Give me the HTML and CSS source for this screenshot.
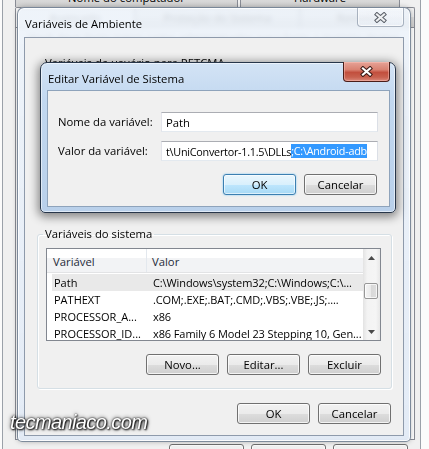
FILE: index.html
```html
<!DOCTYPE html>
<html lang="pt-BR">
<head>
<meta charset="utf-8">
<title>Variáveis de Ambiente</title>
<link rel="stylesheet" href="styles.css">
</head>
<body>
<div class="desk">
  <div class="sysprops">
    <div class="tabrow">
      <div class="tab t1">Nome do computador</div>
      <div class="tab t2">Hardware</div>
    </div>
    <div class="tabrow">
      <div class="tab t3 active">Avançado</div>
      <div class="tab t4">Proteção do Sistema</div>
      <div class="tab t5">Remoto</div>
    </div>
    <div class="tabpanel">
      <p class="note">Você deve fazer logon como administrador para fazer a maioria destas alterações.</p>
    </div>
    <div class="sysbtns" aria-hidden="true">
      <span class="btn wide"></span>
      <span class="btn wide"></span>
      <span class="btn wide"></span>
    </div>
  </div>

  <div class="window envwin">
    <div class="titlebar"><span class="title">Variáveis de Ambiente</span></div>
    <div class="closebtn inactive">
      <svg width="13" height="11" viewBox="0 0 13 11"><path d="M3 2.5 L10 8.5 M10 2.5 L3 8.5" stroke="#5b6069" stroke-width="4.2" stroke-linecap="square"/><path d="M3 2.5 L10 8.5 M10 2.5 L3 8.5" stroke="#eef0f2" stroke-width="2.2" stroke-linecap="square"/></svg>
    </div>
    <div class="client">
      <div class="ugroup"><span class="glabel">Variáveis de usuário para PETCMA</span></div>
      <fieldset class="group">
        <legend>Variáveis do sistema</legend>
        <div class="listview">
          <div class="lvmain">
            <div class="lvhead">
              <div class="hcol1">Variável</div>
              <div class="hcol2">Valor</div>
            </div>
            <div class="lvrows">
              <div class="row sel"><span class="c1">Path</span><span class="c2">C:\Windows\system32;C:\Windows;C:\...</span></div>
              <div class="row"><span class="c1">PATHEXT</span><span class="c2">.COM;.EXE;.BAT;.CMD;.VBS;.VBE;.JS;....</span></div>
              <div class="row"><span class="c1">PROCESSOR_A...</span><span class="c2">x86</span></div>
              <div class="row"><span class="c1">PROCESSOR_ID...</span><span class="c2">x86 Family 6 Model 23 Stepping 10, Gen...</span></div>
            </div>
          </div>
          <div class="vscroll">
            <div class="sbtn"><svg width="7" height="4" viewBox="0 0 7 4"><path d="M0 4 L3.5 0 L7 4 Z" fill="#4a4a4a"/></svg></div>
            <div class="track"><div class="thumb"></div></div>
            <div class="sbtn"><svg width="7" height="4" viewBox="0 0 7 4"><path d="M0 0 L7 0 L3.5 4 Z" fill="#4a4a4a"/></svg></div>
          </div>
        </div>
        <div class="btnrow">
          <span class="btn">Novo...</span>
          <span class="btn">Editar...</span>
          <span class="btn">Excluir</span>
        </div>
      </fieldset>
      <div class="btnrow dlgbtns">
        <span class="btn">OK</span>
        <span class="btn">Cancelar</span>
      </div>
    </div>
  </div>

  <div class="window editdlg">
    <div class="titlebar"><span class="title">Editar Variável de Sistema</span></div>
    <div class="closebtn active">
      <svg width="13" height="11" viewBox="0 0 13 11"><path d="M3 2.5 L10 8.5 M10 2.5 L3 8.5" stroke="#3b1a16" stroke-width="4.2" stroke-linecap="square"/><path d="M3 2.5 L10 8.5 M10 2.5 L3 8.5" stroke="#ffffff" stroke-width="2.2" stroke-linecap="square"/></svg>
    </div>
    <div class="dclient">
      <div class="frow">
        <span class="flabel">Nome da variável:</span>
        <div class="input">Path</div>
      </div>
      <div class="frow second">
        <span class="flabel">Valor da variável:</span>
        <div class="input value"><span>t\UniConvertor-1.1.5\DLLs</span><span class="seltext">;C:\Android-adb</span></div>
      </div>
      <div class="btnrow dbtns">
        <span class="btn default">OK</span>
        <span class="btn">Cancelar</span>
      </div>
    </div>
  </div>

  <div class="watermark">tecmaniaco.com</div>
</div>
</body>
</html>
```
FILE: styles.css
```css
* { box-sizing: border-box; }
html, body { margin: 0; padding: 0; }
body {
  font-family: "Open Sans", "Noto Sans", sans-serif;
  font-size: 11.3px;
  color: #000;
}
.desk {
  position: relative;
  width: 429px;
  height: 449px;
  overflow: hidden;
  background: #fbfbfb;
}

/* background window (Propriedades do Sistema) */
.sysprops {
  position: absolute;
  left: 2px;
  top: -14px;
  width: 419px;
  height: 470px;
  border: 1px solid #9ba1a9;
  background: #f0f0f0;
  padding: 0 5px 0 12px;
  display: flex;
  flex-direction: column;
}
.tabrow { display: flex; height: 20px; flex: none; }
.tab {
  height: 20px;
  border: 1px solid #898c95;
  border-bottom: none;
  border-radius: 2px 2px 0 0;
  background: linear-gradient(#f3f3f3, #ebebeb 50%, #dddddd 50%, #cfcfcf);
  display: flex;
  align-items: center;
  justify-content: center;
  color: #000;
  white-space: nowrap;
}
.tab.active { background: #fff; }
.t1 { width: 223px; }
.t2 { width: 160px; margin-left: 2px; }
.t3 { width: 120px; }
.t4 { width: 165px; }
.t5 { width: 115px; }
.tabpanel {
  height: 413px;
  flex: none;
  border: 1px solid #898c95;
  background: #fff;
  padding: 2px 12px;
}
.note { margin: 0; color: #222; }
.sysbtns { display: flex; justify-content: flex-end; gap: 7px; margin-top: 4px; margin-right: 7px; }
.btn.wide { width: 75px; height: 23px; }

/* generic window */
.window { position: absolute; display: flex; flex-direction: column; }
.titlebar { display: flex; align-items: center; flex: none; padding-left: 1px; }
.title { white-space: nowrap; color: #000; }
.closebtn {
  position: absolute;
  width: 47px;
  height: 20px;
  border-radius: 0 0 4px 4px;
  display: flex;
  align-items: center;
  justify-content: center;
}
.closebtn svg { display: block; }

/* Variáveis de Ambiente */
.envwin {
  left: 17px;
  top: 7px;
  width: 394px;
  height: 435px;
  border: 1px solid rgba(80, 95, 115, .7);
  border-radius: 7px 7px 5px 5px;
  background: linear-gradient(180deg, rgba(236, 242, 249, .88), rgba(224, 233, 245, .9));
  backdrop-filter: blur(2.4px);
  box-shadow: inset 0 0 0 1px rgba(255, 255, 255, .8), 0 0 5px rgba(0, 0, 0, .25);
  padding: 0 6px 5px 6px;
}
.envwin .titlebar { height: 29px; padding-top: 1px; }
.closebtn.inactive {
  top: 0;
  right: 6px;
  height: 19px;
  border: 1px solid rgba(110, 125, 145, .55);
  border-top: none;
  background: linear-gradient(rgba(255,255,255,.35), rgba(235,240,247,.5));
  box-shadow: inset 0 0 0 1px rgba(255, 255, 255, .6);
}
.client {
  flex: 1;
  border: 1px solid #8e9aab;
  background: #f0f0f0;
  display: flex;
  flex-direction: column;
  padding: 0 11px 0 12px;
}
.ugroup { height: 188px; flex: none; padding: 17px 0 0 8px; line-height: 16px; }
.glabel { white-space: nowrap; }
.group {
  margin: 0;
  padding: 6px 10px 13px 8px;
  border: 1px solid #d5dfe5;
  border-radius: 3px;
  box-shadow: inset 1px 1px 0 #fff, 1px 1px 0 #fff;
  min-width: 0;
}
.group legend {
  padding: 0 2px;
  margin-left: -3px;
  line-height: 16px;
  white-space: nowrap;
}
.listview {
  height: 93px;
  border: 1px solid #828790;
  background: #fff;
  display: flex;
  font-size: 11px;
}
.lvmain { flex: 1; min-width: 0; overflow: hidden; }
.lvhead {
  height: 24px;
  display: flex;
  border-bottom: 1px solid #e2e3e5;
  background: linear-gradient(#ffffff 0%, #ffffff 40%, #f2f3f5 41%, #f2f3f5 100%);
  color: #1e2a3a;
  font-size: 11.3px;
}
.hcol1 {
  width: 100px;
  padding: 2px 0 0 6px;
  border-right: 1px solid #e3e8ee;
  display: flex;
  align-items: center;
}
.hcol2 { flex: 1; padding: 2px 0 0 5px; display: flex; align-items: center; }
.lvrows { padding-top: 1px; }
.row {
  height: 17px;
  margin-left: 5px;
  display: flex;
  align-items: center;
  white-space: nowrap;
}
.row.sel { background: #e9e9e9; }
.c1 { width: 99px; flex: none; padding-left: 2px; overflow: hidden; }
.c2 { flex: 1; padding-left: 2px; overflow: hidden; letter-spacing: -0.1px; }
.vscroll {
  width: 17px;
  flex: none;
  display: flex;
  flex-direction: column;
  background: linear-gradient(90deg, #e3e3e3, #f3f3f3 25%, #f5f5f5 75%, #e8e8e8);
}
.sbtn { height: 17px; flex: none; display: flex; align-items: center; justify-content: center; }
.track { flex: 1; }
.thumb {
  margin: 17px 2px 0 1px;
  height: 16px;
  border: 1px solid #979797;
  border-radius: 2px;
  background: linear-gradient(90deg, #f4f4f4, #e9e9e9 50%, #d8d8d8 51%, #dedede);
  box-shadow: inset 0 0 0 1px rgba(255, 255, 255, .7);
}
.btnrow { display: flex; justify-content: flex-end; gap: 8px; margin-top: 13px; }
.btn {
  width: 73px;
  height: 21px;
  border: 1px solid #707070;
  border-radius: 3px;
  background: linear-gradient(#f2f2f2 0%, #ebebeb 50%, #dddddd 51%, #cfcfcf 100%);
  box-shadow: inset 0 0 0 1px rgba(255, 255, 255, .75);
  display: flex;
  align-items: center;
  justify-content: center;
  white-space: nowrap;
  color: #000;
}
.btn.default {
  border-color: #3c7fb1;
  background: linear-gradient(#eaf6fd 0%, #d9f0fc 50%, #bee6fd 51%, #a7d9f5 100%);
  box-shadow: inset 0 0 0 1px rgba(255, 255, 255, .6), 0 0 2px #6fc1f2;
}
.dlgbtns { margin-top: 14px; margin-right: 1px; }

/* Editar Variável de Sistema */
.editdlg {
  left: 40px;
  top: 62px;
  width: 356px;
  height: 151px;
  border: 1px solid #27364a;
  border-radius: 7px 7px 5px 5px;
  background: linear-gradient(180deg, #d3e3f5 0%, #c2d8f0 25%, #b9d0ea 100%);
  box-shadow: inset 0 0 0 1px rgba(255, 255, 255, .55), 0 2px 10px 2px rgba(0, 0, 0, .45);
  padding: 0 5px 5px 6px;
}
.editdlg .titlebar { height: 27px; padding-top: 3px; }
.closebtn.active {
  top: -1px;
  right: 5px;
  border: 1px solid #4a1d19;
  border-top: none;
  background: linear-gradient(#e6a397 0%, #d98272 40%, #c24f3e 55%, #c8614f 80%, #d9887a 100%);
  box-shadow: inset 0 0 0 1px rgba(255, 200, 190, .45);
}
.dclient {
  flex: 1;
  border: 1px solid #8ea3bb;
  background: #f0f0f0;
  padding: 21px 11px 0 10px;
  display: flex;
  flex-direction: column;
}
.frow { display: flex; align-items: center; height: 20px; }
.frow.second { margin-top: 9px; }
.flabel { width: 103px; flex: none; white-space: nowrap; padding-bottom: 2px; }
.input {
  width: 217px;
  height: 20px;
  border: 1px solid;
  border-color: #abadb3 #dbdfe6 #e3e9ef #e2e3ea;
  background: #fff;
  padding: 0 4px;
  display: flex;
  align-items: center;
  overflow: hidden;
  white-space: nowrap;
}
.input.value { font-size: 10.8px; letter-spacing: -0.25px; }
.seltext { background: #3399ff; color: #fff; line-height: 14px; }
.dbtns { margin-top: 13px; margin-right: 1px; }

.watermark {
  position: absolute;
  left: 10px;
  top: 410px;
  font: italic 20px/24px "Liberation Sans", Arial, sans-serif;
  letter-spacing: -0.6px;
  color: #fff;
  text-shadow: 0 0 2px #000, 0 0 4px rgba(0, 0, 0, .8), 1px 1px 2px #000;
  white-space: nowrap;
}
```
